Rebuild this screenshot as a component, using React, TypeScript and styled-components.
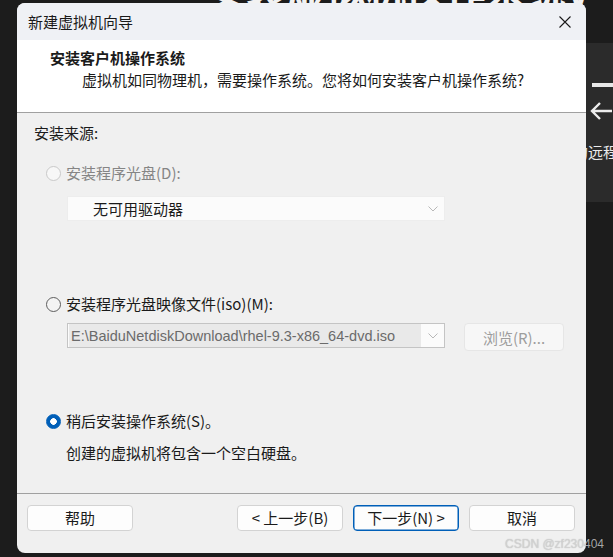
import React from 'react';
import styled, { createGlobalStyle } from 'styled-components';

const GlobalStyle = createGlobalStyle`
  body {
    margin: 0;
    background: #1c1c1c;
    font-family: "Noto Sans CJK SC", "Noto Sans", sans-serif;
  }
`

const Desktop = styled.div`
  position: relative;
  width: 613px;
  height: 557px;
  overflow: hidden;
  display: flex;
  align-items: flex-start;
  padding: 3px 0 0 17px;
  box-sizing: border-box;
  background: #1c1c1c;
`

const BackdropTitle = styled.div`
  position: absolute;
  top: -31px;
  left: 206px;
  font-size: 40px;
  line-height: 40px;
  font-weight: 700;
  color: #f2f2f2;
  white-space: nowrap;
`

const Window = styled.div`
  position: relative;
  z-index: 1;
  width: 569px;
  height: 550px;
  flex-shrink: 0;
  display: flex;
  flex-direction: column;
  border-radius: 8px;
  overflow: hidden;
  background: #f0f0f0;
  color: #1a1a1a;
  font-size: 15px;
`

const TitleBar = styled.div`
  height: 37px;
  display: flex;
  align-items: center;
  justify-content: space-between;
  padding: 0 15px 0 11px;
  background: #eff1f5;
  line-height: 20px;
`

const Header = styled.div`
  height: 72px;
  background: #fff;
  border-bottom: 1px solid #a0a0a0;
  display: flex;
  flex-direction: column;
  padding-left: 33px;
`

const HeaderTitle = styled.div`
  margin-top: 8px;
  font-weight: 700;
  line-height: 20px;
`

const HeaderText = styled.div`
  margin-top: 2px;
  padding-left: 32px;
  line-height: 20px;
`

const Body = styled.div`
  flex: 1;
  display: flex;
  flex-direction: column;
  padding-left: 17px;
`

const SectionLabel = styled.div`
  margin-top: 10px;
  line-height: 20px;
`

const RadioRow = styled.div<{ $top: number; $disabled?: boolean }>`
  margin-top: ${p => p.$top}px;
  padding-left: 12px;
  display: flex;
  align-items: center;
  gap: 5px;
  height: 20px;
  line-height: 20px;
  color: ${p => (p.$disabled ? '#858585' : '#1a1a1a')};
`

const Radio = styled.span<{ $state: 'disabled' | 'off' | 'on' }>`
  width: 15px;
  height: 15px;
  border-radius: 50%;
  box-sizing: border-box;
  flex-shrink: 0;
  border: 1px solid
    ${p => (p.$state === 'disabled' ? '#c9c9c9' : p.$state === 'off' ? '#5d5d5d' : '#005fb8')};
  background: ${p =>
    p.$state === 'on'
      ? 'radial-gradient(circle, #fff 0 3px, #005fb8 3.6px)'
      : p.$state === 'off'
        ? '#f4f4f4'
        : '#f7f7f7'};
`

const FieldRow = styled.div<{ $top: number }>`
  margin-top: ${p => p.$top}px;
  margin-left: 33px;
  display: flex;
  align-items: flex-start;
  gap: 19px;
`

const Combo = styled.div<{ $disabled?: boolean }>`
  width: 378px;
  height: 25px;
  box-sizing: border-box;
  display: flex;
  align-items: center;
  border: 1px solid ${p => (p.$disabled ? '#ededed' : '#c4c4c4')};
  background: #fbfbfb;
  line-height: 20px;
`

const ComboText = styled.div<{ $dim?: boolean }>`
  flex: 1;
  height: 100%;
  display: flex;
  align-items: center;
  padding-left: ${p => (p.$dim ? '2px' : '25px')};
  margin: ${p => (p.$dim ? '2px 0 2px 1px' : '0')};
  background: ${p => (p.$dim ? '#e9e9e9' : 'transparent')};
  color: ${p => (p.$dim ? '#6b6b6b' : '#1a1a1a')};
  font-family: ${p => (p.$dim ? '"Liberation Sans", "Noto Sans CJK SC", sans-serif' : 'inherit')};
  font-size: ${p => (p.$dim ? '14.5px' : '15px')};
  box-sizing: border-box;
  white-space: nowrap;
  overflow: hidden;
`

const ComboArrow = styled.div`
  width: 23px;
  display: flex;
  justify-content: center;
  align-items: center;
`

const BrowseButton = styled.div`
  width: 100px;
  height: 28px;
  box-sizing: border-box;
  display: flex;
  align-items: center;
  justify-content: center;
  border: 1px solid #e6e6e6;
  border-radius: 4px;
  background: #f7f7f7;
  color: #9d9d9d;
`

const Note = styled.div`
  margin-top: 12px;
  padding-left: 32px;
  line-height: 20px;
`

const Footer = styled.div`
  height: 48px;
  border-top: 1px solid #a0a0a0;
  display: flex;
  align-items: flex-start;
  gap: 10px;
  padding: 11px 11px 0 10px;
`

const Spacer = styled.div`
  flex: 1;
`

const Button = styled.div<{ $focused?: boolean }>`
  width: 106px;
  height: 26px;
  box-sizing: border-box;
  display: flex;
  align-items: center;
  justify-content: center;
  border: 1px solid ${p => (p.$focused ? '#005fb8' : '#d3d3d3')};
  box-shadow: ${p => (p.$focused ? 'inset 0 0 0 0.5px #005fb8' : 'none')};
  border-radius: 4px;
  background: #fdfdfd;
  line-height: 20px;
`

const SidePanel = styled.div`
  width: 27px;
  flex-shrink: 0;
  margin-top: 40px;
  height: 159px;
  background: #2b2b2b;
  display: flex;
  flex-direction: column;
  align-items: flex-start;
  color: #ececec;
`

const SideBar = styled.div`
  margin: 40px 0 0 6px;
  width: 21px;
  height: 4px;
  flex-shrink: 0;
  background: #e8e8e8;
`

const SideArrow = styled.div`
  margin: 12px 0 0 3px;
  height: 24px;
`

const SideText = styled.div`
  margin: 19px 0 0 -13px;
  font-size: 15px;
  line-height: 20px;
  white-space: nowrap;
`

const Watermark = styled.div`
  position: absolute;
  z-index: 2;
  right: 9px;
  bottom: 5px;
  font-family: "Liberation Sans", Arial, sans-serif;
  font-size: 12px;
  line-height: 16px;
  color: rgba(215, 215, 215, 0.75);
  text-shadow: 0 0 1px rgba(0, 0, 0, 0.25);
`

const Chevron = () => (
  <svg width="10" height="6" viewBox="0 0 10 6">
    <path d="M0.5 0.5 L5 5 L9.5 0.5" fill="none" stroke="#b8b8b8" strokeWidth="1" />
  </svg>
)

function App() {
  return (
    <Desktop>
      <GlobalStyle />
      <BackdropTitle>安装虚拟机操作系统V</BackdropTitle>
      <Window>
        <TitleBar>
          <span>新建虚拟机向导</span>
          <svg width="12" height="12" viewBox="0 0 12 12">
            <path d="M0.5 0.5 L11.5 11.5 M11.5 0.5 L0.5 11.5" stroke="#1a1a1a" strokeWidth="1.1" />
          </svg>
        </TitleBar>
        <Header>
          <HeaderTitle>安装客户机操作系统</HeaderTitle>
          <HeaderText>虚拟机如同物理机，需要操作系统。您将如何安装客户机操作系统?</HeaderText>
        </Header>
        <Body>
          <SectionLabel>安装来源:</SectionLabel>
          <RadioRow $top={20} $disabled>
            <Radio $state="disabled" />
            安装程序光盘(D):
          </RadioRow>
          <FieldRow $top={13}>
            <Combo $disabled>
              <ComboText>无可用驱动器</ComboText>
              <ComboArrow><Chevron /></ComboArrow>
            </Combo>
          </FieldRow>
          <RadioRow $top={73}>
            <Radio $state="off" />
            安装程序光盘映像文件(iso)(M):
          </RadioRow>
          <FieldRow $top={9}>
            <Combo>
              <ComboText $dim>E:\BaiduNetdiskDownload\rhel-9.3-x86_64-dvd.iso</ComboText>
              <ComboArrow><Chevron /></ComboArrow>
            </Combo>
            <BrowseButton>浏览(R)...</BrowseButton>
          </FieldRow>
          <RadioRow $top={60}>
            <Radio $state="on" />
            稍后安装操作系统(S)。
          </RadioRow>
          <Note>创建的虚拟机将包含一个空白硬盘。</Note>
        </Body>
        <Footer>
          <Button>帮助</Button>
          <Spacer />
          <Button>&lt; 上一步(B)</Button>
          <Button $focused>下一步(N) &gt;</Button>
          <Button>取消</Button>
        </Footer>
      </Window>
      <SidePanel>
        <SideBar />
        <SideArrow>
          <svg width="24" height="24" viewBox="0 0 24 24">
            <path d="M23 12 H3 M11 4 L3 12 L11 20" fill="none" stroke="#ececec" strokeWidth="2.4" />
          </svg>
        </SideArrow>
        <SideText>的远程桌面</SideText>
      </SidePanel>
      <Watermark>CSDN @zf230404</Watermark>
    </Desktop>
  );
}

export default App;
